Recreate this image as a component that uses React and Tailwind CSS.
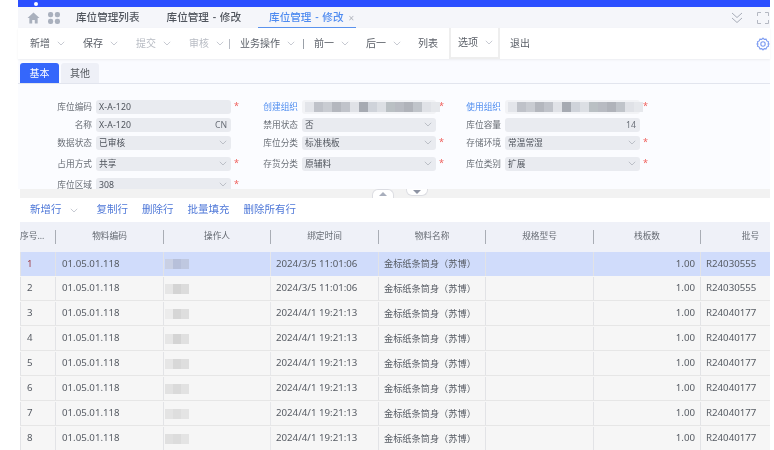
import React from 'react';

const Chev = ({ c = 'text-[#b9bdc6]', w = 8 }) => (
  <svg viewBox="0 0 10 6" width={w} height={w * 0.6} className={`${c} shrink-0`} fill="none" stroke="currentColor" strokeWidth="1">
    <path d="M1 1l4 4 4-4" />
  </svg>
);

const Blur = ({ cols, w = 9, h = 10 }) => (
  <div className="flex blur-[0.7px]">
    {cols.map((c, i) => (
      <div key={i} className="shrink-0" style={{ background: c, width: w, height: h }} />
    ))}
  </div>
);

const Tool = ({ t, dim, menu = true, cls = '' }) => (
  <div className={`flex items-center gap-[7px] ${cls}`}>
    <span className={`text-[10px] ${dim ? 'text-[#b8bcc4]' : 'text-[#5b6068]'}`}>{t}</span>
    {menu && <Chev />}
  </div>
);

const Label = ({ t, link }) => (
  <div className={`w-[74px] shrink-0 pt-[2px] text-right text-[8.7px] ${link ? 'text-[#4f8df0]' : 'text-[#6b7078]'}`}>{t}</div>
);

const Star = () => <span className="-mt-[2px] -ml-[1px] w-[6px] text-[9px] leading-none text-[#f0605c]">*</span>;

const Field = ({ label, link, value, right, select, star, blur, latin, narrow }) => (
  <div className="flex items-center gap-[4px]">
    <Label t={label} link={link} />
    <div className={`flex h-[14px] shrink-0 items-center justify-between rounded-[3px] pl-[3px] pr-[4px] text-[8.7px] text-[#4e535b] ${narrow ? 'w-[134px]' : 'w-[135px]'} ${blur ? 'bg-[#f2f3f6]' : 'bg-[#e9ebf0]'}`}>
      {blur ? <Blur cols={blur} /> : <span className={`truncate pt-px ${latin ? 'tracking-[0.15px]' : ''}`}>{value}</span>}
      {right && <span className="pt-px text-[#6a6f78]">{right}</span>}
      {select && <Chev c="text-[#b0b4bc]" />}
    </div>
    {star ? <Star /> : <span className="w-[6px]" />}
  </div>
);

const cols = [
  ['序号...', 'w-[36px]'],
  ['物料编码', 'w-[108px]'],
  ['操作人', 'w-[107px]'],
  ['绑定时间', 'w-[108px]'],
  ['物料名称', 'w-[107px]'],
  ['规格型号', 'w-[108px]'],
  ['栈板数', 'w-[107px]'],
  ['批号', 'flex-1 pl-[30px]'],
];

const blurs = [
  ['#c9d0e4', '#b7c0da', '#bfc8e0'],
  ['#e6e6e6', '#d4d4d4', '#dcdcdc'],
  ['#ececec', '#d6d6d6', '#dedede'],
  ['#e6e6e6', '#d4d4d4', '#e0e0e0'],
  ['#e6e6e6', '#d8d8d8', '#dedede'],
  ['#e2e2e2', '#dadada', '#e2e2e2'],
  ['#e4e4e4', '#dedede', '#e4e4e4'],
  ['#e0e0e0', '#dcdcdc', '#e4e4e4'],
];

const rows = [
  ['1', '2024/3/5 11:01:06', 'R24030555', 'h-[24px]'],
  ['2', '2024/3/5 11:01:06', 'R24030555', 'h-[25px] pt-px'],
  ['3', '2024/4/1 19:21:13', 'R24040177', 'h-[25px] pt-px'],
  ['4', '2024/4/1 19:21:13', 'R24040177', 'h-[25px] pt-px'],
  ['5', '2024/4/1 19:21:13', 'R24040177', 'h-[25px] pt-px'],
  ['6', '2024/4/1 19:21:13', 'R24040177', 'h-[25px] pt-px'],
  ['7', '2024/4/1 19:21:13', 'R24040177', 'h-[25px] pt-px'],
  ['8', '2024/4/1 19:21:13', 'R24040177', 'h-[25px] pt-px'],
];

const org = ['#e3e5ea', '#bfc2c9', '#c9ccd2', '#b4b7be', '#c0c3ca', '#e0e2e7', '#a6aab2', '#cfd3da', '#dcdfe4', '#bac0c4', '#b8bbc2', '#b0b3ba', '#c0c4ca', '#e0e2e7', '#e6e8ec'];

export default function App() {
  return (
    <div className="h-[450px] w-[774px] overflow-hidden bg-white pl-[18px] pr-[4px] font-['Noto_Sans','Noto_Sans_CJK_SC',sans-serif] blur-[0.4px]">
      <div className="flex h-[7px] items-center bg-[#2b4fff] pl-[16px]">
        <span className="size-[4px] rounded-full bg-white" />
      </div>

      <div className="flex h-[21px] items-center bg-[#f5f6fa] pl-[9px]">
        <svg viewBox="0 0 14 13" width="13" height="12" className="text-[#a9b0bd]" fill="currentColor">
          <path d="M7 0.5L0.5 6.5H2.5V12.5H5.6V8.6H8.4V12.5H11.5V6.5H13.5Z" />
        </svg>
        <svg viewBox="0 0 12 12" width="12" height="12" className="ml-[8px] text-[#a9b0bd]" fill="currentColor">
          <rect x="0" y="0" width="5.2" height="5.2" rx="2.2" />
          <rect x="6.8" y="0" width="5.2" height="5.2" rx="2.2" />
          <rect x="0" y="6.8" width="5.2" height="5.2" rx="2.2" />
          <rect x="6.8" y="6.8" width="5.2" height="5.2" rx="2.2" />
        </svg>
        <span className="ml-[16px] text-[10.6px] font-medium text-[#50555d]">库位管理列表</span>
        <span className="ml-[27px] text-[10.6px] font-medium text-[#50555d] [word-spacing:1px]">库位管理 - 修改</span>
        <div className="ml-[17px] flex h-full items-center gap-[5px] border-b border-[#5b93ee] pl-[11px] pr-[2px] pt-px">
          <span className="text-[10.6px] font-medium text-[#4f8bf0] [word-spacing:1px]">库位管理 - 修改</span>
          <span className="text-[10px] leading-none text-[#b4b8c0]">×</span>
        </div>
        <div className="ml-auto flex items-center gap-[14px] pr-[1px]">
          <svg viewBox="0 0 12 12" width="12" height="12" fill="none" stroke="#a8adb8" strokeWidth="1">
            <path d="M1 1l5 4.5L11 1M1 6l5 4.5L11 6" />
          </svg>
          <svg viewBox="0 0 12 12" width="12" height="12" fill="none" stroke="#b4b8c2" strokeWidth="1">
            <path d="M0.5 4V0.5H4M8 0.5h3.5V4M0.5 8v3.5H4M8 11.5h3.5V8" />
          </svg>
        </div>
      </div>

      <div className="relative z-10 flex h-[31px] items-center bg-white pl-[12px] shadow-[0_1px_2px_rgba(0,0,0,0.06)]">
        <Tool t="新增" />
        <Tool t="保存" cls="ml-[18px]" />
        <Tool t="提交" dim cls="ml-[18px]" />
        <Tool t="审核" dim cls="ml-[18px]" />
        <span className="ml-[5px] h-[10px] w-px bg-[#b8bcc4]" />
        <Tool t="业务操作" cls="ml-[10px]" />
        <span className="ml-[8px] h-[10px] w-px bg-[#9aa0a8]" />
        <Tool t="前一" cls="ml-[10px]" />
        <Tool t="后一" cls="ml-[17px]" />
        <Tool t="列表" menu={false} cls="ml-[17px]" />
        <div className="ml-[11px] flex h-[31px] items-center gap-[7px] border-x-2 border-b-2 border-[#eeeeee] pl-[7px] pr-[5px]">
          <span className="text-[10px] text-[#5b6068]">选项</span>
          <Chev />
        </div>
        <Tool t="退出" menu={false} cls="ml-[10px]" />
        <svg viewBox="0 0 14 14" width="14" height="14" className="ml-auto" fill="none" stroke="#7d9cf2" strokeWidth="1.1">
          <path d="M7 1l1.2 1.4 1.9-.2.7 1.7 1.7.8-.3 1.9L13 7l-.8.4.3 1.9-1.7.8-.7 1.7-1.9-.2L7 13l-1.2-1.4-1.9.2-.7-1.7-1.7-.8.3-1.9L1 7l.8-.4-.3-1.9 1.7-.8.7-1.7 1.9.2Z" />
          <circle cx="7" cy="7" r="2.2" />
        </svg>
      </div>

      <div className="flex h-[25px] items-end gap-[2px] border-b border-[#e2e5ee] bg-[#fafbff] pl-[2px]">
        <div className="flex h-[20px] w-[39px] items-center justify-center rounded-t-[3px] bg-[#3567fb] text-[10px] text-white">基本</div>
        <div className="flex h-[20px] w-[38px] items-center justify-center rounded-t-[3px] bg-[#eef0f7] text-[10px] text-[#55595f]">其他</div>
      </div>

      <div className="grid h-[105px] grid-cols-[206px_203px_1fr] grid-rows-[18px_18px_21px_21px_21px] content-start items-start overflow-hidden bg-[#fbfcff] pt-[15px]">
        <Field label="库位编码" value="X-A-120" latin star />
        <Field label="创建组织" link blur={org} star narrow />
        <Field label="使用组织" link blur={org} star />

        <Field label="名称" value="X-A-120" latin right="CN" />
        <Field label="禁用状态" value="否" select narrow />
        <Field label="库位容量" right="14" />

        <Field label="数据状态" value="已审核" select />
        <Field label="库位分类" value="标准栈板" select star narrow />
        <Field label="存储环境" value="常温常湿" select star />

        <Field label="占用方式" value="共享" select star />
        <Field label="存货分类" value="原辅料" select star narrow />
        <Field label="库位类别" value="扩展" select star />

        <Field label="库位区域" value="308" select star />
      </div>

      <div className="ml-[2px]">
        <div className="flex h-[9px] items-start justify-center gap-[12px] bg-[#f2f2f2] pl-[10px]">
          <div className="flex h-[9px] w-[22px] items-center justify-center rounded-t-[6px] border-x border-t border-[#dcdde2] bg-white">
            <span className="size-0 border-x-[4px] border-b-[4px] border-x-transparent border-b-[#a8aebc]" />
          </div>
          <div className="flex h-[7px] w-[22px] items-center justify-center rounded-b-[6px] border-x border-b border-[#dcdde2] bg-white">
            <span className="size-0 border-x-[4px] border-t-[4px] border-x-transparent border-t-[#8d93a3]" />
          </div>
        </div>

        <div className="flex h-[24px] items-center bg-white pl-[10px] text-[10.5px] text-[#4f78d8]">
          <span>新增行</span>
          <span className="ml-[8px]"><Chev /></span>
          <span className="ml-[19px]">复制行</span>
          <span className="ml-[14px]">删除行</span>
          <span className="ml-[14px]">批量填充</span>
          <span className="ml-[14px]">删除所有行</span>
        </div>

        <div className="flex h-[30px] items-center bg-[#eff1f8] text-[8.7px] text-[#666b73]">
          {cols.map(([t, w], i) => (
            <div key={t} className={`flex h-[14px] items-center ${w} ${i < 7 ? 'border-r border-[#a9adb5]' : ''} ${i === 0 ? 'justify-start' : 'justify-center'}`}>
              {t}
            </div>
          ))}
        </div>

        {rows.map(([n, time, batch, h], i) => (
          <div key={n} className={`flex ${h} items-center text-[9.7px] text-[#565b63] ${i === 0 ? 'bg-[#d0dcfb]' : 'border-b border-[#e6e6e6] bg-[#f6f6f6]'}`}>
            <div className={`flex h-full w-[36px] items-center border-x border-[#e2e3e6] pl-[6px] ${i === 0 ? 'text-[#a0404a]' : ''}`}>{n}</div>
            <div className="flex h-full w-[108px] items-center border-r border-[#e2e3e6] pl-[6px]">01.05.01.118</div>
            <div className="flex h-full w-[107px] items-center border-r border-[#e6e7ea] pl-[1px]"><Blur cols={blurs[i]} w={8} h={10} /></div>
            <div className="flex h-full w-[108px] items-center border-r border-[#e2e3e6] pl-[5px]">{time}</div>
            <div className="flex h-full w-[107px] items-center whitespace-nowrap border-r border-[#e2e3e6] pl-[5px] text-[9.2px]">金标纸条筒身（苏博）</div>
            <div className="h-full w-[108px] border-r border-[#e2e3e6]" />
            <div className="flex h-full w-[107px] items-center justify-end border-r border-[#e2e3e6] pr-[5px]">1.00</div>
            <div className="flex h-full flex-1 items-center pl-[5px]">{batch}</div>
          </div>
        ))}
      </div>
    </div>
  );
}
